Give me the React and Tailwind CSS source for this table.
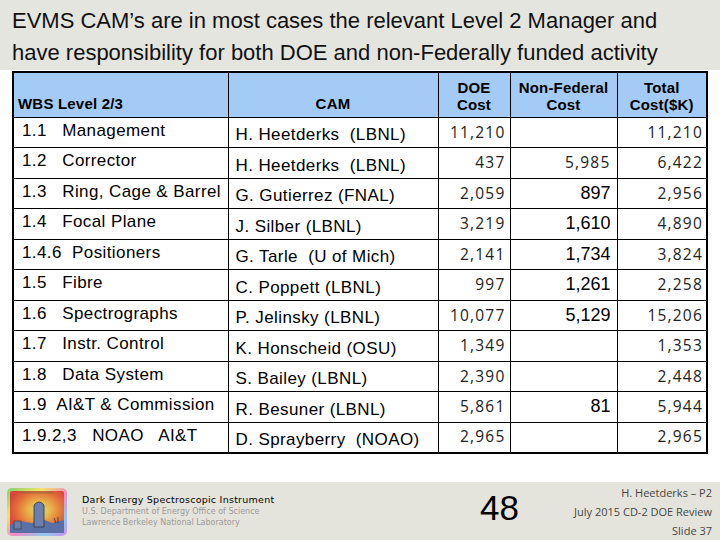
import React from "react";

const rows = [
  ["1.1   Management", "H. Heetderks  (LBNL)", "11,210", "", "11,210", false],
  ["1.2   Corrector", "H. Heetderks  (LBNL)", "437", "5,985", "6,422", false],
  ["1.3   Ring, Cage & Barrel", "G. Gutierrez (FNAL)", "2,059", "897", "2,956", true],
  ["1.4   Focal Plane", "J. Silber (LBNL)", "3,219", "1,610", "4,890", true],
  ["1.4.6  Positioners", "G. Tarle  (U of Mich)", "2,141", "1,734", "3,824", true],
  ["1.5   Fibre", "C. Poppett (LBNL)", "997", "1,261", "2,258", true],
  ["1.6   Spectrographs", "P. Jelinsky (LBNL)", "10,077", "5,129", "15,206", true],
  ["1.7   Instr. Control", "K. Honscheid (OSU)", "1,349", "", "1,353", false],
  ["1.8   Data System", "S. Bailey (LBNL)", "2,390", "", "2,448", false],
  ["1.9  AI&T & Commission", "R. Besuner (LBNL)", "5,861", "81", "5,944", true],
  ["1.9.2,3   NOAO   AI&T", "D. Sprayberry  (NOAO)", "2,965", "", "2,965", false],
];

const arial = { fontFamily: '"Liberation Sans", Arial, sans-serif' };
const narrow = { fontFamily: '"Liberation Sans Narrow", "Arial Narrow", "Liberation Sans", sans-serif' };
const num = { fontFamily: '"Open Sans", sans-serif', letterSpacing: "1.2px" };

function Logo() {
  return (
    <svg width="62" height="50" viewBox="0 0 62 50">
      <defs>
        <linearGradient id="rb" x1="0" y1="0" x2="1" y2="1">
          <stop offset="0" stopColor="#7fd36f" />
          <stop offset="0.3" stopColor="#f3e36a" />
          <stop offset="0.55" stopColor="#f28cc8" />
          <stop offset="0.8" stopColor="#8fc8f0" />
          <stop offset="1" stopColor="#d58df0" />
        </linearGradient>
        <radialGradient id="sky" cx="0.55" cy="0.45" r="0.6">
          <stop offset="0" stopColor="#d8e27a" />
          <stop offset="0.35" stopColor="#e9b24a" />
          <stop offset="0.7" stopColor="#e4713a" />
          <stop offset="1" stopColor="#d6463a" />
        </radialGradient>
      </defs>
      <rect x="1" y="1" width="60" height="48" rx="5" fill="url(#rb)" />
      <rect x="4" y="4" width="54" height="42" rx="2" fill="url(#sky)" />
      <path d="M4 38 L14 34 L26 36 L36 32 L46 36 L58 33 L58 46 L4 46 Z" fill="#5a6fa6" />
      <path d="M28 40 L28 18 Q33 12 38 18 L38 40 Z" fill="#6b7fae" stroke="#333" strokeWidth="0.8" />
      <rect x="8" y="34" width="7" height="8" fill="#6b7fae" stroke="#333" strokeWidth="0.6" />
      <path d="M48 31 L50 36 M52 30 L52 36" stroke="#333" strokeWidth="0.8" />
      <rect x="14" y="4.5" width="34" height="2" fill="#8a6a3a" opacity="0.6" />
    </svg>
  );
}

export default function App() {
  return (
    <div className="w-[720px] h-[540px] bg-white flex flex-col overflow-hidden" style={arial}>
      <div className="h-[70px] bg-[#e5e5df] pl-[12px] pt-[5px] text-[22px] leading-[32px] text-[#111]">
        <div>EVMS CAM’s are in most cases the relevant Level 2 Manager and</div>
        <div>have responsibility for both DOE and non-Federally funded activity</div>
      </div>
      <div className="pl-[12px] pt-[1px]">
        <table className="border-collapse border-2 border-black text-black" style={{ width: 694, tableLayout: "fixed" }}>
          <colgroup>
            <col style={{ width: 215 }} />
            <col style={{ width: 210 }} />
            <col style={{ width: 72 }} />
            <col style={{ width: 107 }} />
            <col style={{ width: 90 }} />
          </colgroup>
          <thead>
            <tr className="bg-[#a4cbf5] h-[45px] font-bold text-[15px] leading-[17px] tracking-[0.2px]">
              <th className="border border-black align-bottom text-left pl-[4px] pb-[5px] font-bold">WBS Level 2/3</th>
              <th className="border border-black align-bottom text-center pb-[5px] font-bold">CAM</th>
              <th className="border border-black align-bottom text-center pb-[4px] font-bold">DOE<br />Cost</th>
              <th className="border border-black align-top text-center pt-[6px] font-bold">Non-Federal<br />Cost</th>
              <th className="border border-black align-bottom text-center pb-[4px] font-bold">Total<br />Cost($K)</th>
            </tr>
          </thead>
          <tbody>
            {rows.map((r, i) => (
              <tr key={i} className="h-[30.5px]">
                <td className="border border-black pl-[8px] text-[17px] leading-[20px] tracking-[0.4px] align-top pt-[3px] whitespace-pre">{r[0]}</td>
                <td className="border border-black pl-[7px] text-[17px] leading-[20px] tracking-[0.4px] align-bottom pb-[2px] whitespace-pre">{r[1]}</td>
                <td className="border border-black text-right pr-[4px] text-[15.5px] text-[#222]" style={num}>{r[2]}</td>
                <td className={"border border-black text-right pr-[6px] " + (r[5] ? "text-[18px]" : "text-[15.5px] text-[#222]")} style={r[5] ? narrow : num}>{r[3]}</td>
                <td className="border border-black text-right pr-[3px] text-[15.5px] text-[#222]" style={num}>{r[4]}</td>
              </tr>
            ))}
          </tbody>
        </table>
      </div>
      <div className="flex-1" />
      <div className="h-[58px] bg-[#e5e4dc] flex items-center relative">
        <div className="pl-[6px] pt-[2px]"><Logo /></div>
        <div className="pl-[14px] pb-[1px] flex flex-col" style={{ fontFamily: '"DejaVu Sans", sans-serif' }}>
          <div className="text-[9.5px] leading-[12px] tracking-[0.25px] text-black">Dark Energy Spectroscopic Instrument</div>
          <div className="text-[8px] leading-[11px] text-[#9a9a9a]">U.S. Department of Energy Office of Science</div>
          <div className="text-[8px] leading-[11px] text-[#9a9a9a]">Lawrence Berkeley National Laboratory</div>
        </div>
        <div className="absolute left-[480px] top-[6px] text-[35px] leading-[40px] text-black">48</div>
        <div className="ml-auto pr-[8px] flex flex-col items-end text-[11px] leading-[19px] text-[#444]" style={{ fontFamily: '"Open Sans", sans-serif' }}>
          <div>H. Heetderks – P2</div>
          <div>July 2015 CD-2 DOE Review</div>
          <div>Slide 37</div>
        </div>
      </div>
    </div>
  );
}
